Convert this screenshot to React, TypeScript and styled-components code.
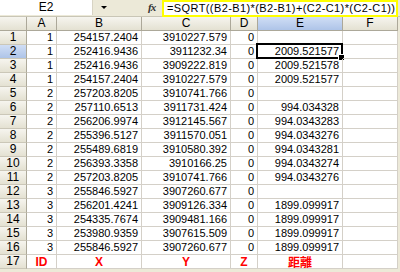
import React from "react";
import styled, { createGlobalStyle } from "styled-components";

const GlobalStyle = createGlobalStyle`
  html, body {
    margin: 0;
    padding: 0;
    background: #ece9d8;
  }
  body {
    font-family: "Liberation Sans", Arial, "Noto Sans CJK JP", sans-serif;
    width: 400px;
    height: 272px;
    overflow: hidden;
  }
`;

const widths = [27, 30, 85, 89, 27, 85, 55];
const columns = ["A", "B", "C", "D", "E", "F"];

type Row = [string, string, string, string, string];

const rows: Row[] = [
  ["1", "254157.2404", "3910227.579", "0", ""],
  ["1", "252416.9436", "3911232.34", "0", "2009.521577"],
  ["1", "252416.9436", "3909222.819", "0", "2009.521578"],
  ["1", "254157.2404", "3910227.579", "0", "2009.521577"],
  ["2", "257203.8205", "3910741.766", "0", ""],
  ["2", "257110.6513", "3911731.424", "0", "994.034328"],
  ["2", "256206.9974", "3912145.567", "0", "994.0343283"],
  ["2", "255396.5127", "3911570.051", "0", "994.0343276"],
  ["2", "255489.6819", "3910580.392", "0", "994.0343281"],
  ["2", "256393.3358", "3910166.25", "0", "994.0343274"],
  ["2", "257203.8205", "3910741.766", "0", "994.0343276"],
  ["3", "255846.5927", "3907260.677", "0", ""],
  ["3", "256201.4241", "3909126.334", "0", "1899.099917"],
  ["3", "254335.7674", "3909481.166", "0", "1899.099917"],
  ["3", "253980.9359", "3907615.509", "0", "1899.099917"],
  ["3", "255846.5927", "3907260.677", "0", "1899.099917"],
];

const labels = ["ID", "X", "Y", "Z", "距離", ""];

const App = () => {
  return (
    <>
      <GlobalStyle />
      <Window>
        <FormulaBar>
          <NameBox>E2</NameBox>
          <DropArrow />
          <FxLabel>fx</FxLabel>
          <FormulaInput>=SQRT((B2-B1)*(B2-B1)+(C2-C1)*(C2-C1))</FormulaInput>
        </FormulaBar>
        <Sheet>
          <Corner />
          {columns.map((c) => (
            <ColHeader key={c} $selected={c === "E"}>
              {c}
            </ColHeader>
          ))}
          {rows.map((r, i) => (
            <React.Fragment key={i}>
              <RowHeader $selected={i === 1}>{i + 1}</RowHeader>
              {r.map((v, j) => (
                <Cell key={j}>
                  {v}
                  {i === 1 && j === 4 && (
                    <ActiveFrame>
                      <FillHandle />
                    </ActiveFrame>
                  )}
                </Cell>
              ))}
              <Cell />
            </React.Fragment>
          ))}
          <RowHeader>17</RowHeader>
          {labels.map((l, j) => (
            <LabelCell key={j} $kanji={l === "距離"}>
              {l}
            </LabelCell>
          ))}
        </Sheet>
      </Window>
    </>
  );
};

export default App;

const Window = styled.div`
  width: 400px;
  height: 272px;
  background: #ece9d8;
  overflow: hidden;
`;

const FormulaBar = styled.div`
  display: flex;
  align-items: stretch;
  height: 17px;
  background: #ece9d8;
  border-bottom: 1px solid #c9c6b6;
  box-sizing: border-box;
`;

const NameBox = styled.div`
  width: 92px;
  height: 15px;
  background: #fff;
  border-right: 1px solid #d8d4c4;
  font-size: 12px;
  line-height: 15px;
  text-align: center;
  color: #000;
`;

const DropArrow = styled.div`
  width: 0;
  height: 0;
  margin: 6px 8px 0 8px;
  border-left: 3px solid transparent;
  border-right: 3px solid transparent;
  border-top: 3px solid #000;
`;

const FxLabel = styled.div`
  margin-left: 33px;
  width: 14px;
  font-family: "Liberation Serif", "Times New Roman", serif;
  font-style: italic;
  font-weight: bold;
  font-size: 11px;
  line-height: 15px;
  color: #333;
  letter-spacing: -1px;
`;

const FormulaInput = styled.div`
  flex: 1;
  margin-right: 2px;
  background: #fff;
  border: 2px solid #ffff00;
  box-sizing: border-box;
  height: 17px;
  padding-left: 3px;
  font-size: 11px;
  letter-spacing: 0.4px;
  line-height: 13px;
  white-space: nowrap;
  overflow: hidden;
  color: #000;
`;

const Sheet = styled.div`
  display: grid;
  grid-template-columns: ${widths.map((w) => `${w}px`).join(" ")};
  grid-auto-rows: 14px;
  background: #fff;
  width: 398px;
  font-size: 11px;
  color: #000;
`;

const Corner = styled.div`
  background: linear-gradient(#f6f5ef, #e4e1d2);
  border-right: 1px solid #aca899;
  border-bottom: 1px solid #aca899;
  box-sizing: border-box;
`;

const ColHeader = styled.div<{ $selected?: boolean }>`
  background: ${({ $selected }) =>
    $selected
      ? "linear-gradient(#d0def5, #aec4e8)"
      : "linear-gradient(#f6f5ef, #e4e1d2)"};
  border-right: 1px solid #aca899;
  border-bottom: 1px solid #aca899;
  box-sizing: border-box;
  text-align: center;
  line-height: 13px;
  font-size: 12px;
`;

const RowHeader = styled.div<{ $selected?: boolean }>`
  background: ${({ $selected }) =>
    $selected
      ? "linear-gradient(#d0def5, #aec4e8)"
      : "linear-gradient(#f6f5ef, #e4e1d2)"};
  border-right: 1px solid #aca899;
  border-bottom: 1px solid #cbc7b8;
  box-sizing: border-box;
  text-align: center;
  line-height: 13px;
  font-size: 12px;
`;

const Cell = styled.div`
  position: relative;
  border-right: 1px solid #d4d0c8;
  border-bottom: 1px solid #d4d0c8;
  box-sizing: border-box;
  text-align: right;
  padding-right: 3px;
  line-height: 13px;
  white-space: nowrap;
`;

const LabelCell = styled.div<{ $kanji?: boolean }>`
  border-right: 1px solid #d4d0c8;
  border-bottom: 1px solid #d4d0c8;
  box-sizing: border-box;
  text-align: center;
  color: #ff0000;
  font-weight: bold;
  font-size: 12px;
  line-height: 14px;
  font-family: ${({ $kanji }) =>
    $kanji
      ? `"Noto Sans CJK JP", sans-serif`
      : `"Liberation Sans", Arial, sans-serif`};
`;

const ActiveFrame = styled.div`
  position: absolute;
  left: -2px;
  top: -2px;
  right: -1px;
  bottom: -1px;
  border: 2px solid #000;
  pointer-events: none;
`;

const FillHandle = styled.div`
  position: absolute;
  right: -4px;
  bottom: -4px;
  width: 5px;
  height: 5px;
  background: #000;
  border: 1px solid #fff;
`;
